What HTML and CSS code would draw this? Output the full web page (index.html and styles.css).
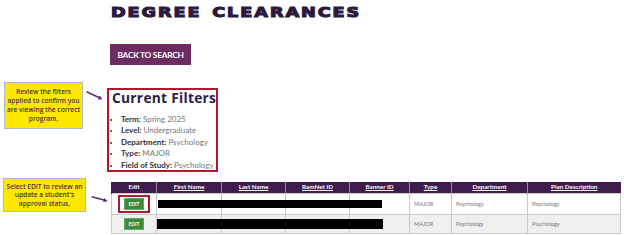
FILE: index.html
```html
<!DOCTYPE html>
<html lang="en">
<head>
<meta charset="utf-8">
<title>Degree Clearances</title>
<link rel="stylesheet" href="styles.css">
</head>
<body>
<div class="page">
  <header class="top">
    <h1 class="title"><span class="title-text">DEGREE CLEARANCES</span></h1>
    <a class="back-btn" href="#">BACK TO SEARCH</a>
  </header>

  <section class="annot-row filters-row">
    <div class="annot">
      <div class="callout callout-1">Review the filters<br>applied to confirm you<br>are viewing the correct<br>program.</div>
      <svg class="arrow arrow-1" width="18" height="10" viewBox="0 0 18 10">
        <line x1="0.5" y1="0.8" x2="14" y2="7" stroke="#5a2d86" stroke-width="1.6"/>
        <polygon points="16.5,8.4 11.6,8.2 13.6,4.4" fill="#5a2d86"/>
      </svg>
    </div>
    <div class="filters">
      <h2 class="filters-title">Current Filters</h2>
      <ul class="filters-list">
        <li><b>Term:</b> Spring 2025</li>
        <li><b>Level:</b> Undergraduate</li>
        <li><b>Department:</b> Psychology</li>
        <li><b>Type:</b> MAJOR</li>
        <li><b>Field of Study:</b> Psychology</li>
      </ul>
    </div>
  </section>

  <section class="annot-row table-row">
    <div class="annot">
      <div class="callout callout-2">Select EDIT to review an<br>update a student's<br>approval status.</div>
      <svg class="arrow arrow-2" width="18" height="8" viewBox="0 0 18 8">
        <line x1="0.5" y1="0.8" x2="14" y2="4.2" stroke="#5a2d86" stroke-width="1.6"/>
        <polygon points="16.8,5 12.2,6.2 13.2,2.2" fill="#5a2d86"/>
      </svg>
    </div>
    <table class="results">
      <colgroup>
        <col class="c-edit"><col class="c-first"><col class="c-last"><col class="c-ram"><col class="c-banner"><col class="c-type"><col class="c-dept"><col class="c-plan">
      </colgroup>
      <thead>
        <tr>
          <th>Edit</th><th>First Name</th><th>Last Name</th><th>RamNet ID</th><th>Banner ID</th><th>Type</th><th>Department</th><th>Plan Description</th>
        </tr>
      </thead>
      <tbody>
        <tr class="row-a">
          <td class="edit-cell"><span class="highlight"><a class="edit-btn" href="#">EDIT</a></span></td>
          <td class="name-cell"><span class="redact redact-1"></span></td>
          <td></td><td></td><td></td>
          <td>MAJOR</td><td>Psychology</td><td>Psychology</td>
        </tr>
        <tr class="row-b">
          <td class="edit-cell"><a class="edit-btn" href="#">EDIT</a></td>
          <td class="name-cell"><span class="redact redact-2"></span></td>
          <td></td><td></td><td></td>
          <td>MAJOR</td><td>Psychology</td><td>Psychology</td>
        </tr>
      </tbody>
    </table>
  </section>
</div>
</body>
</html>
```

FILE: styles.css
```css
* { box-sizing: border-box; }
html, body { margin: 0; padding: 0; background: #ffffff; }
body { font-family: Lato, "Open Sans", sans-serif; color: #333; width: 624px; height: 235px; overflow: hidden; }

.page { display: flex; flex-direction: column; }

.top { display: flex; flex-direction: column; align-items: flex-start; padding-left: 110px; }
.title { margin: 0; padding-top: 5px; padding-left: 1px; height: 19px; font-family: "DejaVu Sans", sans-serif; font-weight: 700; font-size: 13.7px; line-height: 14px; color: #2c1a3e; }
.title-text { display: inline-block; transform: scaleX(1.29); transform-origin: left center; letter-spacing: 1.5px; word-spacing: 2px; -webkit-text-stroke: 1.1px #2c1a3e; }

.back-btn { margin-top: 25px; width: 81px; height: 21px; background: #6b2d5f; color: #fff; text-decoration: none; font-family: Lato, sans-serif; font-weight: 700; font-size: 8.3px; letter-spacing: -0.25px; display: flex; align-items: center; justify-content: center; }

.annot-row { display: grid; align-items: start; }
.filters-row { grid-template-columns: 107px auto; margin-top: 17px; }
.table-row { grid-template-columns: 111px auto; margin-top: 6px; }

.annot { display: flex; align-items: flex-start; }
.callout { background: #ffe800; border: 1px solid #a9bccb; color: #4e2f4c; font-family: "Open Sans", sans-serif; font-weight: 600; font-size: 6.6px; line-height: 9px; text-align: center; }
.callout-1 { margin-left: 4px; width: 79px; height: 47px; padding-top: 4px; }
.callout-2 { margin-left: 3px; width: 83px; height: 34px; padding-top: 4px; line-height: 8.3px; }
.arrow { display: block; flex: none; }
.arrow-1 { margin-left: 3px; margin-top: 9px; }
.arrow-2 { margin-left: 5px; margin-top: 18px; }

.filters { margin-top: 6px; width: 111px; height: 84px; border: 2px solid #b0182c; padding: 0 0 0 3px; }
.filters-title { margin: 0; white-space: nowrap; font-family: "Open Sans", sans-serif; font-weight: 700; font-size: 13.8px; line-height: 15px; letter-spacing: 0.25px; color: #2b1c48; }
.filters-list { margin: 9px 0 0 0; padding: 0 0 0 9px; font-family: Lato, sans-serif; font-size: 8px; line-height: 11.4px; color: #777; }
.filters-list li { white-space: nowrap; }
.filters-list li::marker { color: #333; font-size: 7px; }
.filters-list b { color: #333; font-weight: 700; }

.results { margin-top: 4px; width: 509px; border-collapse: collapse; table-layout: fixed; font-family: Lato, sans-serif; }
.c-edit { width: 45px; } .c-first { width: 65px; } .c-last { width: 64px; } .c-ram { width: 64px; }
.c-banner { width: 60px; } .c-type { width: 42px; } .c-dept { width: 76px; } .c-plan { width: 93px; }
.results th { height: 11px; padding: 0; background: #3e1c4b; color: #fff; font-size: 6.3px; font-weight: 700; text-decoration: underline; text-align: center; border-left: 1px solid #9c8aa3; line-height: 10px; }
.results th:first-child { border-left: 1px solid #3e1c4b; text-decoration: none; }
.results td { padding: 0 0 0 4px; border: 1px solid #c9c9c9; font-size: 5.6px; color: #777; vertical-align: middle; }
.row-a td { height: 21px; background: #fff; }
.row-b td { height: 19px; background: #efefef; }
.results td.edit-cell { padding: 0; text-align: center; }
.name-cell { position: relative; }

.highlight { display: inline-block; border: 2px solid #b0182c; padding: 1px 4px; margin-top: 1px; vertical-align: middle; }
.edit-btn { display: block; margin: 0 auto; width: 20px; height: 12px; background: #3b8a3f; border: 1px solid #62a864; color: #fff; text-decoration: none; font-size: 5px; font-weight: 700; line-height: 10px; text-align: center; }

.redact { position: absolute; background: #000; display: block; }
.redact-1 { left: 1px; top: 6px; width: 224px; height: 8px; }
.redact-2 { left: 0; top: 4px; width: 226px; height: 10px; }
```
